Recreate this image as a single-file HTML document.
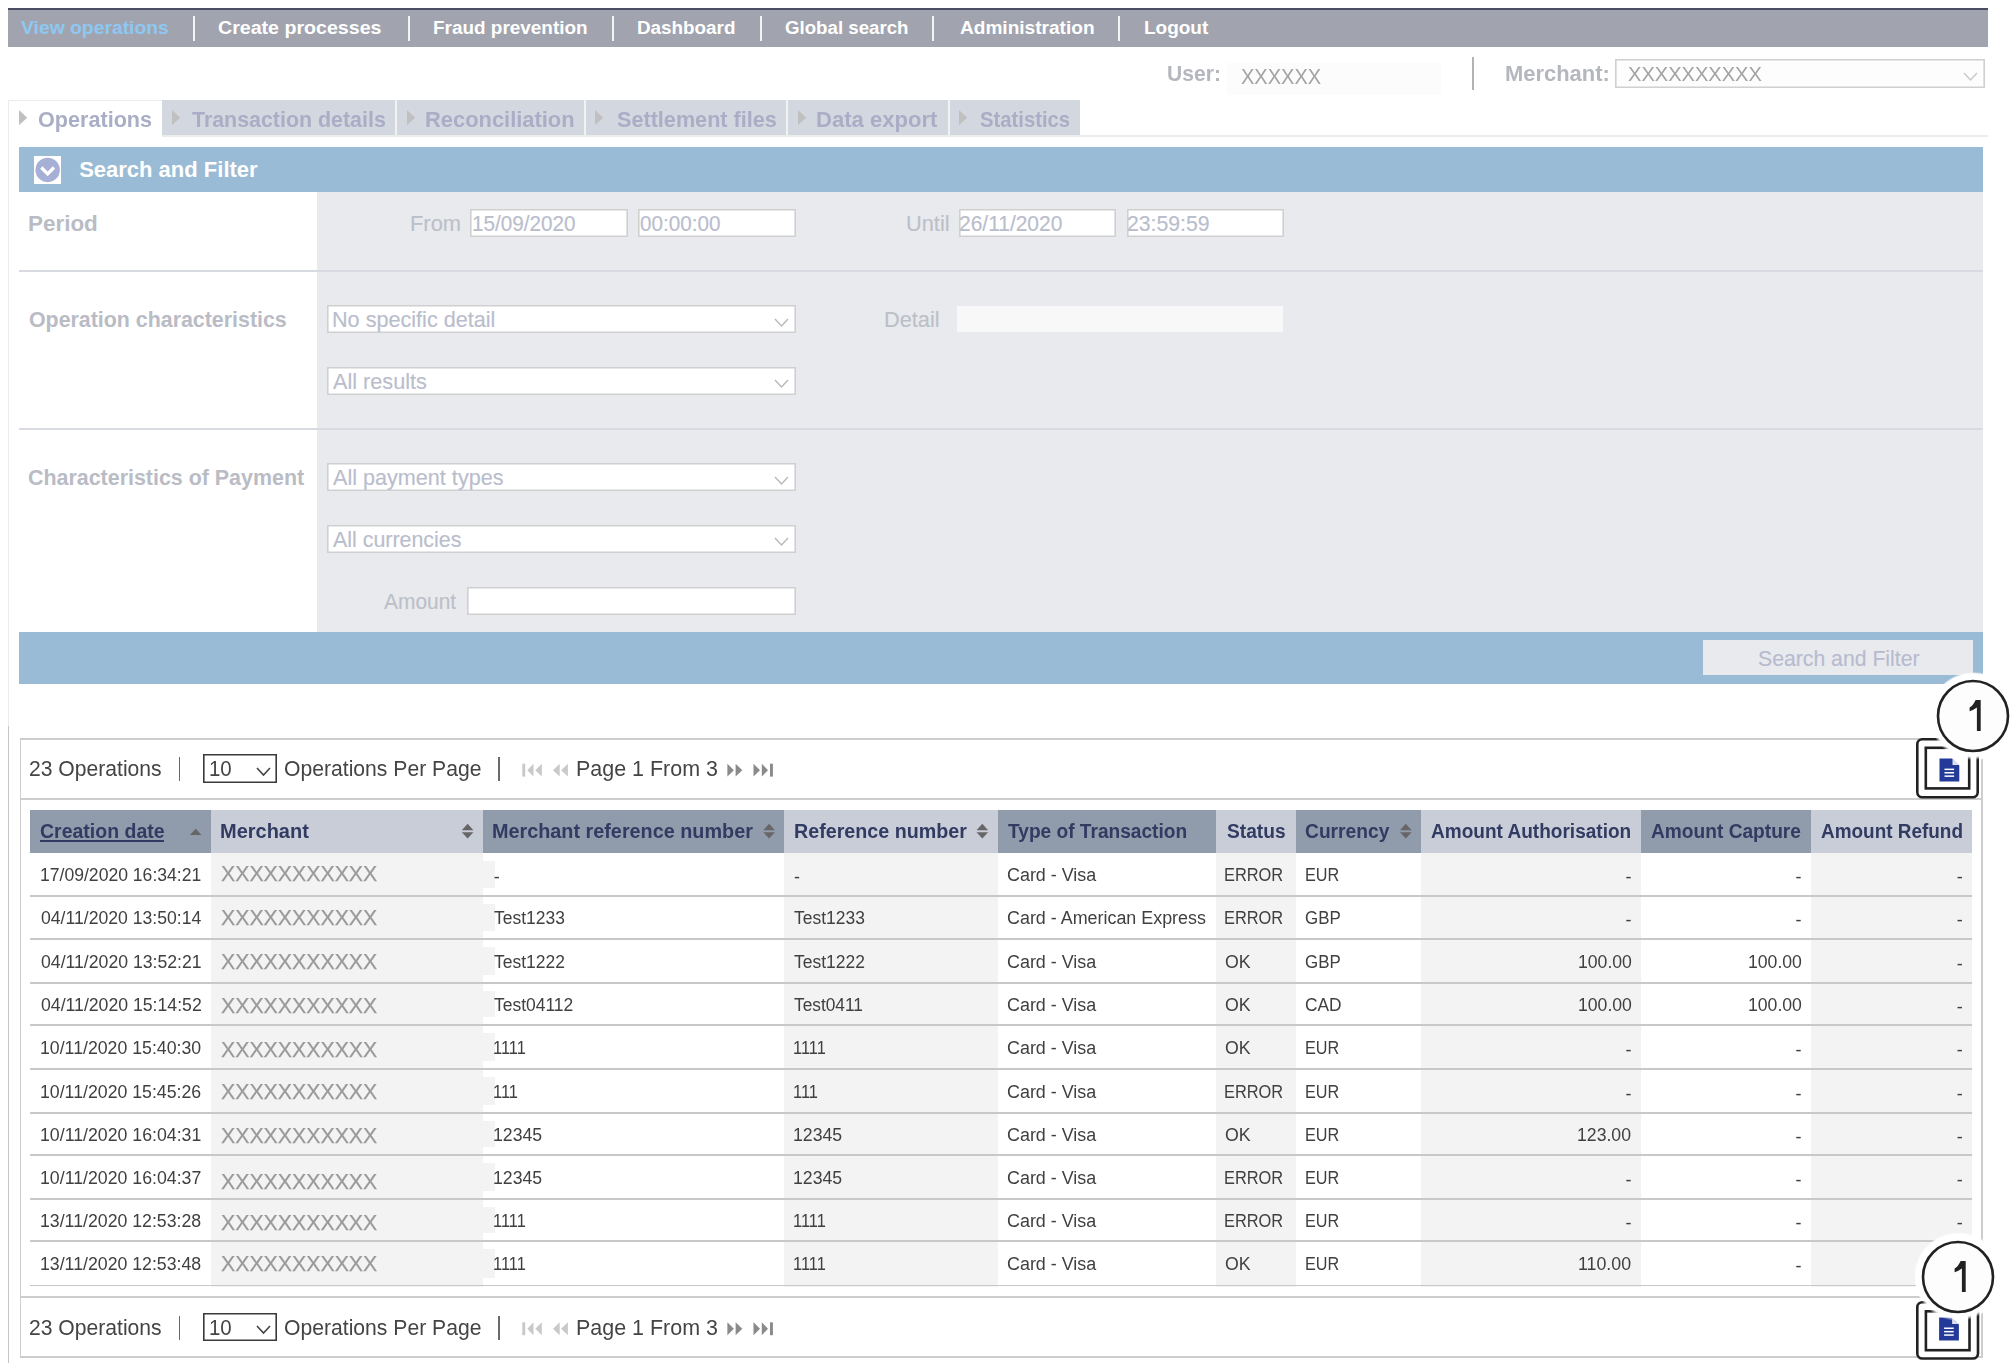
<!DOCTYPE html><html><head><meta charset="utf-8"><title>View operations</title><style>
html,body{margin:0;padding:0;}
body{width:2016px;height:1363px;position:relative;overflow:hidden;background:#fff;font-family:"Liberation Sans",sans-serif;}
.t{position:absolute;white-space:pre;}
.b{position:absolute;}
</style></head><body>
<div id="page" style="position:absolute;left:0;top:0;width:2016px;height:1363px;filter:blur(0.4px);">
<!-- top navigation -->
<div class="b" style="left:8px;top:8px;width:1980.00px;height:39.00px;background:#a1a4ae;"></div>
<div class="b" style="left:8px;top:8px;width:1980.00px;height:2.00px;background:#4b4d64;"></div>
<span class="t" style="left:20.65px;top:17.02px;font-size:19.2px;line-height:22.06px;color:#8ec8f2;font-weight:bold;transform:scaleX(1.0071);transform-origin:0 0;">View operations</span>
<span class="t" style="left:218.42px;top:17.02px;font-size:19.2px;line-height:22.06px;color:#fff;font-weight:bold;transform:scaleX(1.0218);transform-origin:0 0;">Create processes</span>
<span class="t" style="left:433.42px;top:17.02px;font-size:19.2px;line-height:22.06px;color:#fff;font-weight:bold;transform:scaleX(0.9866);transform-origin:0 0;">Fraud prevention</span>
<span class="t" style="left:636.73px;top:17.02px;font-size:19.2px;line-height:22.06px;color:#fff;font-weight:bold;transform:scaleX(0.9823);transform-origin:0 0;">Dashboard</span>
<span class="t" style="left:785.25px;top:17.02px;font-size:19.2px;line-height:22.06px;color:#fff;font-weight:bold;transform:scaleX(0.9733);transform-origin:0 0;">Global search</span>
<span class="t" style="left:959.82px;top:17.02px;font-size:19.2px;line-height:22.06px;color:#fff;font-weight:bold;transform:scaleX(0.9938);transform-origin:0 0;">Administration</span>
<span class="t" style="left:1143.92px;top:17.02px;font-size:19.2px;line-height:22.06px;color:#fff;font-weight:bold;transform:scaleX(0.9889);transform-origin:0 0;">Logout</span>
<div class="b" style="left:193px;top:16px;width:2.00px;height:25.00px;background:#f4f4f6;"></div>
<div class="b" style="left:408px;top:16px;width:2.00px;height:25.00px;background:#f4f4f6;"></div>
<div class="b" style="left:612px;top:16px;width:2.00px;height:25.00px;background:#f4f4f6;"></div>
<div class="b" style="left:760px;top:16px;width:2.00px;height:25.00px;background:#f4f4f6;"></div>
<div class="b" style="left:932px;top:16px;width:2.00px;height:25.00px;background:#f4f4f6;"></div>
<div class="b" style="left:1118px;top:16px;width:2.00px;height:25.00px;background:#f4f4f6;"></div>
<!-- user / merchant -->
<span class="t" style="left:1166.63px;top:61.04px;font-size:22px;line-height:25.28px;color:#b5b7bf;font-weight:bold;transform:scaleX(0.9583);transform-origin:0 0;">User:</span>
<div class="b" style="left:1227px;top:63px;width:214.00px;height:32.00px;background:#fcfcfc;"></div>
<span class="t" style="left:1240.85px;top:64.67px;font-size:21.2px;line-height:24.36px;color:#a3a3a3;transform:scaleX(0.9452);transform-origin:0 0;">XXXXXX</span>
<div class="b" style="left:1471.5px;top:57px;width:2.00px;height:33.00px;background:#b3b3b3;"></div>
<span class="t" style="left:1504.92px;top:61.04px;font-size:22px;line-height:25.28px;color:#b5b7bf;font-weight:bold;transform:scaleX(0.9967);transform-origin:0 0;">Merchant:</span>
<div class="b" style="left:1615px;top:59px;width:370.00px;height:29.00px;background:#fdfdfd;box-shadow:inset 0 0 0 1.6px #d0d0d0;"></div>
<span class="t" style="left:1628.45px;top:62.32px;font-size:20.5px;line-height:23.55px;color:#a3a3a3;transform:scaleX(0.9786);transform-origin:0 0;">XXXXXXXXXX</span>
<svg class="b" style="left:1961.5px;top:70.5px" width="17" height="11"><polyline points="2,2 8.5,9 15,2" fill="none" stroke="#c8c8c8" stroke-width="1.4"/></svg>
<!-- tabs -->
<div class="b" style="left:8px;top:100px;width:154.00px;height:36.00px;background:#fff;box-shadow:inset 1px 1px 0 #ececec;"></div>
<div class="b" style="left:162px;top:100px;width:918.00px;height:36.00px;background:#d3d7df;"></div>
<div class="b" style="left:395px;top:100px;width:2.00px;height:36.00px;background:#f2f2f2;"></div>
<div class="b" style="left:584px;top:100px;width:2.00px;height:36.00px;background:#f2f2f2;"></div>
<div class="b" style="left:786px;top:100px;width:2.00px;height:36.00px;background:#f2f2f2;"></div>
<div class="b" style="left:948px;top:100px;width:2.00px;height:36.00px;background:#f2f2f2;"></div>
<div class="b" style="left:162px;top:135px;width:1826.00px;height:2.00px;background:#ececec;"></div>
<span class="t" style="left:37.84px;top:106.54px;font-size:22px;line-height:25.28px;color:#a9aec6;font-weight:bold;transform:scaleX(0.9821);transform-origin:0 0;">Operations</span>
<svg class="b" style="left:18.9px;top:110.4px" width="9" height="16"><polygon points="0,0 8.2,7.65 0,15.3" fill="#c0c0c0"/></svg>
<span class="t" style="left:192.49px;top:106.54px;font-size:22px;line-height:25.28px;color:#a9aec6;font-weight:bold;transform:scaleX(0.9724);transform-origin:0 0;">Transaction details</span>
<svg class="b" style="left:171.9px;top:110.4px" width="9" height="16"><polygon points="0,0 8.2,7.65 0,15.3" fill="#c0c0c0"/></svg>
<span class="t" style="left:425.32px;top:106.54px;font-size:22px;line-height:25.28px;color:#a9aec6;font-weight:bold;transform:scaleX(0.9948);transform-origin:0 0;">Reconciliation</span>
<svg class="b" style="left:406.5px;top:110.4px" width="9" height="16"><polygon points="0,0 8.2,7.65 0,15.3" fill="#c0c0c0"/></svg>
<span class="t" style="left:617.05px;top:106.54px;font-size:22px;line-height:25.28px;color:#a9aec6;font-weight:bold;transform:scaleX(0.9830);transform-origin:0 0;">Settlement files</span>
<svg class="b" style="left:595.4px;top:110.4px" width="9" height="16"><polygon points="0,0 8.2,7.65 0,15.3" fill="#c0c0c0"/></svg>
<span class="t" style="left:816.41px;top:106.54px;font-size:22px;line-height:25.28px;color:#a9aec6;font-weight:bold;transform:scaleX(1.0030);transform-origin:0 0;">Data export</span>
<svg class="b" style="left:797.5px;top:110.4px" width="9" height="16"><polygon points="0,0 8.2,7.65 0,15.3" fill="#c0c0c0"/></svg>
<span class="t" style="left:979.99px;top:106.54px;font-size:22px;line-height:25.28px;color:#a9aec6;font-weight:bold;transform:scaleX(0.9205);transform-origin:0 0;">Statistics</span>
<svg class="b" style="left:958.7px;top:110.4px" width="9" height="16"><polygon points="0,0 8.2,7.65 0,15.3" fill="#c0c0c0"/></svg>
<div class="b" style="left:8px;top:136px;width:1.00px;height:590.00px;background:#ececec;"></div>
<div class="b" style="left:8px;top:726px;width:1.00px;height:637.00px;background:#c6c6c6;"></div>
<!-- search and filter -->
<div class="b" style="left:19px;top:147px;width:1964.00px;height:45.00px;background:#9abbd5;"></div>
<div class="b" style="left:33.8px;top:156px;width:27.40px;height:27.90px;background:#fff;"></div>
<svg class="b" style="left:33.8px;top:156px" width="28" height="28"><circle cx="13.65" cy="13.95" r="12.2" fill="#a6afd5"/><polyline points="7.3,11.5 13.65,17.9 20.0,11.5" fill="none" stroke="#fff" stroke-width="3.3"/></svg>
<span class="t" style="left:79.14px;top:157.04px;font-size:22px;line-height:25.28px;color:#fff;font-weight:bold;">Search and Filter</span>
<div class="b" style="left:19px;top:192px;width:298.00px;height:440.00px;background:#fff;"></div>
<div class="b" style="left:317px;top:192px;width:1666.00px;height:440.00px;background:#e9eaee;"></div>
<div class="b" style="left:19px;top:270.2px;width:1964.00px;height:1.60px;background:#d7dae1;"></div>
<div class="b" style="left:19px;top:428.2px;width:1964.00px;height:1.60px;background:#d7dae1;"></div>
<span class="t" style="left:27.89px;top:211.04px;font-size:22px;line-height:25.28px;color:#b9bcc5;font-weight:bold;transform:scaleX(1.0198);transform-origin:0 0;">Period</span>
<span class="t" style="left:28.85px;top:306.74px;font-size:22px;line-height:25.28px;color:#b9bcc5;font-weight:bold;transform:scaleX(0.9713);transform-origin:0 0;">Operation characteristics</span>
<span class="t" style="left:28.14px;top:464.94px;font-size:22px;line-height:25.28px;color:#b9bcc5;font-weight:bold;transform:scaleX(0.9733);transform-origin:0 0;">Characteristics of Payment</span>
<span class="t" style="left:410.10px;top:210.54px;font-size:22px;line-height:25.28px;color:#bcbfc8;transform:scaleX(0.9944);transform-origin:0 0;-webkit-text-stroke:0.15px #bcbfc8;">From</span>
<span class="t" style="left:905.51px;top:210.54px;font-size:22px;line-height:25.28px;color:#bcbfc8;transform:scaleX(0.9900);transform-origin:0 0;-webkit-text-stroke:0.15px #bcbfc8;">Until</span>
<div class="b" style="left:470px;top:208.8px;width:158.00px;height:28.40px;background:#fff;box-shadow:inset 0 0 0 1.6px #d0d0d0;"></div>
<span class="t" style="left:472.20px;top:210.94px;font-size:22px;line-height:25.28px;color:#b9bdcc;transform:scaleX(0.9402);transform-origin:0 0;-webkit-text-stroke:0.15px #b9bdcc;">15/09/2020</span>
<div class="b" style="left:638px;top:208.8px;width:158.00px;height:28.40px;background:#fff;box-shadow:inset 0 0 0 1.6px #d0d0d0;"></div>
<span class="t" style="left:639.87px;top:210.94px;font-size:22px;line-height:25.28px;color:#b9bdcc;transform:scaleX(0.9413);transform-origin:0 0;-webkit-text-stroke:0.15px #b9bdcc;">00:00:00</span>
<div class="b" style="left:959px;top:208.8px;width:157.00px;height:28.40px;background:#fff;box-shadow:inset 0 0 0 1.6px #d0d0d0;"></div>
<span class="t" style="left:959.35px;top:210.94px;font-size:22px;line-height:25.28px;color:#b9bdcc;transform:scaleX(0.9527);transform-origin:0 0;-webkit-text-stroke:0.15px #b9bdcc;">26/11/2020</span>
<div class="b" style="left:1127px;top:208.8px;width:157.00px;height:28.40px;background:#fff;box-shadow:inset 0 0 0 1.6px #d0d0d0;"></div>
<span class="t" style="left:1127.14px;top:210.94px;font-size:22px;line-height:25.28px;color:#b9bdcc;transform:scaleX(0.9647);transform-origin:0 0;-webkit-text-stroke:0.15px #b9bdcc;">23:59:59</span>
<div class="b" style="left:327px;top:305px;width:469.00px;height:28.20px;background:#fff;box-shadow:inset 0 0 0 1.6px #d0d0d0;"></div>
<span class="t" style="left:331.52px;top:306.84px;font-size:22px;line-height:25.28px;color:#b9bdcc;transform:scaleX(0.9827);transform-origin:0 0;-webkit-text-stroke:0.15px #b9bdcc;">No specific detail</span>
<svg class="b" style="left:772.5px;top:316.6px" width="17" height="11"><polyline points="2,2 8.5,9 15,2" fill="none" stroke="#b8b8b8" stroke-width="1.4"/></svg>
<div class="b" style="left:327px;top:366.8px;width:469.00px;height:28.20px;background:#fff;box-shadow:inset 0 0 0 1.6px #d0d0d0;"></div>
<span class="t" style="left:333.25px;top:368.64px;font-size:22px;line-height:25.28px;color:#b9bdcc;transform:scaleX(0.9837);transform-origin:0 0;-webkit-text-stroke:0.15px #b9bdcc;">All results</span>
<svg class="b" style="left:772.5px;top:378.4px" width="17" height="11"><polyline points="2,2 8.5,9 15,2" fill="none" stroke="#b8b8b8" stroke-width="1.4"/></svg>
<div class="b" style="left:327px;top:463px;width:469.00px;height:28.30px;background:#fff;box-shadow:inset 0 0 0 1.6px #d0d0d0;"></div>
<span class="t" style="left:333.25px;top:464.89px;font-size:22px;line-height:25.28px;color:#b9bdcc;transform:scaleX(0.9820);transform-origin:0 0;-webkit-text-stroke:0.15px #b9bdcc;">All payment types</span>
<svg class="b" style="left:772.5px;top:474.65px" width="17" height="11"><polyline points="2,2 8.5,9 15,2" fill="none" stroke="#b8b8b8" stroke-width="1.4"/></svg>
<div class="b" style="left:327px;top:524.8px;width:469.00px;height:28.20px;background:#fff;box-shadow:inset 0 0 0 1.6px #d0d0d0;"></div>
<span class="t" style="left:333.25px;top:526.64px;font-size:22px;line-height:25.28px;color:#b9bdcc;transform:scaleX(0.9723);transform-origin:0 0;-webkit-text-stroke:0.15px #b9bdcc;">All currencies</span>
<svg class="b" style="left:772.5px;top:536.4px" width="17" height="11"><polyline points="2,2 8.5,9 15,2" fill="none" stroke="#b8b8b8" stroke-width="1.4"/></svg>
<span class="t" style="left:883.90px;top:307.04px;font-size:22px;line-height:25.28px;color:#bcbfc8;transform:scaleX(0.9893);transform-origin:0 0;-webkit-text-stroke:0.15px #bcbfc8;">Detail</span>
<div class="b" style="left:957px;top:306px;width:326.00px;height:26.00px;background:#f8f8f8;"></div>
<span class="t" style="left:383.95px;top:588.84px;font-size:22px;line-height:25.28px;color:#bcbfc8;transform:scaleX(0.9514);transform-origin:0 0;-webkit-text-stroke:0.15px #bcbfc8;">Amount</span>
<div class="b" style="left:467px;top:586.6px;width:329.00px;height:28.40px;background:#fff;box-shadow:inset 0 0 0 1.6px #d0d0d0;"></div>
<div class="b" style="left:19px;top:632px;width:1964.00px;height:52.00px;background:#9abbd5;"></div>
<div class="b" style="left:1703px;top:640px;width:270.00px;height:35.40px;background:#e9eaee;"></div>
<span class="t" style="left:1758.35px;top:645.64px;font-size:22px;line-height:25.28px;color:#b7bbcf;transform:scaleX(0.9644);transform-origin:0 0;-webkit-text-stroke:0.15px #b7bbcf;">Search and Filter</span>
<!-- results -->
<div class="b" style="left:19.5px;top:738px;width:1.50px;height:620.00px;background:#cdcdcd;"></div>
<div class="b" style="left:1981px;top:738px;width:1.50px;height:620.00px;background:#cdcdcd;"></div>
<div class="b" style="left:19.5px;top:738px;width:1963.00px;height:1.50px;background:#cdcdcd;"></div>
<div class="b" style="left:19.5px;top:798px;width:1963.00px;height:1.50px;background:#cdcdcd;"></div>
<span class="t" style="left:29.24px;top:756.28px;font-size:22.5px;line-height:25.85px;color:#444444;transform:scaleX(0.9387);transform-origin:0 0;">23 Operations</span>
<div class="b" style="left:178.5px;top:757px;width:1.70px;height:24.00px;background:#6a6a6a;"></div>
<div class="b" style="left:203.3px;top:754.2px;width:74.20px;height:28.60px;background:#fff;box-shadow:inset 0 0 0 1.6px #3a3a3a;"></div>
<span class="t" style="left:209.27px;top:756.28px;font-size:22.5px;line-height:25.85px;color:#444444;transform:scaleX(0.9089);transform-origin:0 0;">10</span>
<svg class="b" style="left:255.0px;top:765.5px" width="17" height="11"><polyline points="2,2 8.5,9 15,2" fill="none" stroke="#444" stroke-width="1.6"/></svg>
<span class="t" style="left:284.20px;top:756.28px;font-size:22.5px;line-height:25.85px;color:#444444;transform:scaleX(0.9396);transform-origin:0 0;">Operations Per Page</span>
<div class="b" style="left:497.9px;top:757px;width:1.70px;height:24.00px;background:#6a6a6a;"></div>
<svg class="b" style="left:0;top:0" width="800" height="800"><rect x="522.3" y="763.7" width="2.9" height="12.899999999999977" fill="#c9c9c9"/><polygon points="533.5,763.7 527.3,770.1500000000001 533.5,776.6" fill="#c9c9c9"/><polygon points="541.8,763.7 535.3,770.1500000000001 541.8,776.6" fill="#c9c9c9"/><polygon points="559.7,763.7 553,770.1500000000001 559.7,776.6" fill="#c9c9c9"/><polygon points="567.9,763.7 561.1,770.1500000000001 567.9,776.6" fill="#c9c9c9"/><polygon points="727.4,763.7 733.9,770.1500000000001 727.4,776.6" fill="#8a8a8a"/><polygon points="735.6,763.7 742.3,770.1500000000001 735.6,776.6" fill="#8a8a8a"/><polygon points="753.5,763.7 760,770.1500000000001 753.5,776.6" fill="#8a8a8a"/><polygon points="761.8,763.7 768,770.1500000000001 761.8,776.6" fill="#8a8a8a"/><rect x="770" y="763.7" width="2.9" height="12.899999999999977" fill="#8a8a8a"/></svg>
<span class="t" style="left:575.83px;top:756.08px;font-size:22.5px;line-height:25.85px;color:#444444;transform:scaleX(0.9536);transform-origin:0 0;">Page 1 From 3</span>
<div class="b" style="left:19.5px;top:1296.3px;width:1963.00px;height:1.50px;background:#cdcdcd;"></div>
<div class="b" style="left:19.5px;top:1356.3px;width:1963.00px;height:1.50px;background:#cdcdcd;"></div>
<span class="t" style="left:29.24px;top:1314.88px;font-size:22.5px;line-height:25.85px;color:#444444;transform:scaleX(0.9387);transform-origin:0 0;">23 Operations</span>
<div class="b" style="left:178.5px;top:1315.6px;width:1.70px;height:24.00px;background:#6a6a6a;"></div>
<div class="b" style="left:203.3px;top:1312.8000000000002px;width:74.20px;height:28.60px;background:#fff;box-shadow:inset 0 0 0 1.6px #3a3a3a;"></div>
<span class="t" style="left:209.27px;top:1314.88px;font-size:22.5px;line-height:25.85px;color:#444444;transform:scaleX(0.9089);transform-origin:0 0;">10</span>
<svg class="b" style="left:255.0px;top:1324.1px" width="17" height="11"><polyline points="2,2 8.5,9 15,2" fill="none" stroke="#444" stroke-width="1.6"/></svg>
<span class="t" style="left:284.20px;top:1314.88px;font-size:22.5px;line-height:25.85px;color:#444444;transform:scaleX(0.9396);transform-origin:0 0;">Operations Per Page</span>
<div class="b" style="left:497.9px;top:1315.6px;width:1.70px;height:24.00px;background:#6a6a6a;"></div>
<svg class="b" style="left:0;top:0" width="800" height="1358.6"><rect x="522.3" y="1322.3000000000002" width="2.9" height="12.899999999999864" fill="#c9c9c9"/><polygon points="533.5,1322.3000000000002 527.3,1328.75 533.5,1335.2" fill="#c9c9c9"/><polygon points="541.8,1322.3000000000002 535.3,1328.75 541.8,1335.2" fill="#c9c9c9"/><polygon points="559.7,1322.3000000000002 553,1328.75 559.7,1335.2" fill="#c9c9c9"/><polygon points="567.9,1322.3000000000002 561.1,1328.75 567.9,1335.2" fill="#c9c9c9"/><polygon points="727.4,1322.3000000000002 733.9,1328.75 727.4,1335.2" fill="#8a8a8a"/><polygon points="735.6,1322.3000000000002 742.3,1328.75 735.6,1335.2" fill="#8a8a8a"/><polygon points="753.5,1322.3000000000002 760,1328.75 753.5,1335.2" fill="#8a8a8a"/><polygon points="761.8,1322.3000000000002 768,1328.75 761.8,1335.2" fill="#8a8a8a"/><rect x="770" y="1322.3000000000002" width="2.9" height="12.899999999999864" fill="#8a8a8a"/></svg>
<span class="t" style="left:575.83px;top:1314.68px;font-size:22.5px;line-height:25.85px;color:#444444;transform:scaleX(0.9536);transform-origin:0 0;">Page 1 From 3</span>
<div class="b" style="left:30px;top:809.5px;width:181.00px;height:43.50px;background:#909bab;"></div>
<div class="b" style="left:30px;top:853px;width:181.00px;height:433.50px;background:#fff;"></div>
<div class="b" style="left:211px;top:809.5px;width:272.00px;height:43.50px;background:#c9cdd8;"></div>
<div class="b" style="left:211px;top:853px;width:272.00px;height:433.50px;background:#f3f3f3;"></div>
<div class="b" style="left:483px;top:809.5px;width:301.00px;height:43.50px;background:#909bab;"></div>
<div class="b" style="left:483px;top:853px;width:301.00px;height:433.50px;background:#fff;"></div>
<div class="b" style="left:784px;top:809.5px;width:214.00px;height:43.50px;background:#c9cdd8;"></div>
<div class="b" style="left:784px;top:853px;width:214.00px;height:433.50px;background:#f3f3f3;"></div>
<div class="b" style="left:998px;top:809.5px;width:218.00px;height:43.50px;background:#909bab;"></div>
<div class="b" style="left:998px;top:853px;width:218.00px;height:433.50px;background:#fff;"></div>
<div class="b" style="left:1216px;top:809.5px;width:80.00px;height:43.50px;background:#c9cdd8;"></div>
<div class="b" style="left:1216px;top:853px;width:80.00px;height:433.50px;background:#f3f3f3;"></div>
<div class="b" style="left:1296px;top:809.5px;width:125.00px;height:43.50px;background:#909bab;"></div>
<div class="b" style="left:1296px;top:853px;width:125.00px;height:433.50px;background:#fff;"></div>
<div class="b" style="left:1421px;top:809.5px;width:220.00px;height:43.50px;background:#c9cdd8;"></div>
<div class="b" style="left:1421px;top:853px;width:220.00px;height:433.50px;background:#f3f3f3;"></div>
<div class="b" style="left:1641px;top:809.5px;width:170.00px;height:43.50px;background:#909bab;"></div>
<div class="b" style="left:1641px;top:853px;width:170.00px;height:433.50px;background:#fff;"></div>
<div class="b" style="left:1811px;top:809.5px;width:160.50px;height:43.50px;background:#c9cdd8;"></div>
<div class="b" style="left:1811px;top:853px;width:160.50px;height:433.50px;background:#f3f3f3;"></div>
<span class="t" style="left:39.62px;top:820.10px;font-size:20.3px;line-height:23.32px;color:#323b62;font-weight:bold;transform:scaleX(0.9614);transform-origin:0 0;">Creation date</span>
<span class="t" style="left:220.15px;top:820.10px;font-size:20.3px;line-height:23.32px;color:#323b62;font-weight:bold;transform:scaleX(0.9852);transform-origin:0 0;">Merchant</span>
<span class="t" style="left:492.26px;top:820.10px;font-size:20.3px;line-height:23.32px;color:#323b62;font-weight:bold;transform:scaleX(0.9766);transform-origin:0 0;">Merchant reference number</span>
<span class="t" style="left:793.57px;top:820.10px;font-size:20.3px;line-height:23.32px;color:#323b62;font-weight:bold;transform:scaleX(0.9711);transform-origin:0 0;">Reference number</span>
<span class="t" style="left:1008.01px;top:820.10px;font-size:20.3px;line-height:23.32px;color:#323b62;font-weight:bold;transform:scaleX(0.9421);transform-origin:0 0;">Type of Transaction</span>
<span class="t" style="left:1227.32px;top:820.10px;font-size:20.3px;line-height:23.32px;color:#323b62;font-weight:bold;transform:scaleX(0.9456);transform-origin:0 0;">Status</span>
<span class="t" style="left:1305.33px;top:820.10px;font-size:20.3px;line-height:23.32px;color:#323b62;font-weight:bold;transform:scaleX(0.9478);transform-origin:0 0;">Currency</span>
<span class="t" style="left:1431.02px;top:820.10px;font-size:20.3px;line-height:23.32px;color:#323b62;font-weight:bold;transform:scaleX(0.9387);transform-origin:0 0;">Amount Authorisation</span>
<span class="t" style="left:1651.02px;top:820.10px;font-size:20.3px;line-height:23.32px;color:#323b62;font-weight:bold;transform:scaleX(0.9440);transform-origin:0 0;">Amount Capture</span>
<span class="t" style="left:1820.53px;top:820.10px;font-size:20.3px;line-height:23.32px;color:#323b62;font-weight:bold;transform:scaleX(0.9337);transform-origin:0 0;">Amount Refund</span>
<div class="b" style="left:40.4px;top:840.2px;width:123.30px;height:2.00px;background:#323b62;"></div>
<svg class="b" style="left:0;top:0" width="1500" height="860"><polygon points="189.9,835 195.7,828.7 201.5,835" fill="#666"/><polygon points="461.8,830.2 467.6,823.7 473.40000000000003,830.2" fill="#666"/><polygon points="461.8,832.2 467.6,838.6 473.40000000000003,832.2" fill="#666"/><polygon points="763.3,830.2 769.0999999999999,823.7 774.9,830.2" fill="#666"/><polygon points="763.3,832.2 769.0999999999999,838.6 774.9,832.2" fill="#666"/><polygon points="976.5,830.2 982.3,823.7 988.1,830.2" fill="#666"/><polygon points="976.5,832.2 982.3,838.6 988.1,832.2" fill="#666"/><polygon points="1400,830.2 1405.8,823.7 1411.6,830.2" fill="#666"/><polygon points="1400,832.2 1405.8,838.6 1411.6,832.2" fill="#666"/></svg>
<div class="b" style="left:483px;top:861px;width:12.00px;height:27.00px;background:#f3f3f3;"></div>
<span class="t" style="left:39.98px;top:865.22px;font-size:18px;line-height:20.68px;color:#404040;transform:scaleX(0.9764);transform-origin:0 0;">17/09/2020 16:34:21</span>
<span class="t" style="left:220.82px;top:861.80px;font-size:21.5px;line-height:24.70px;color:#999999;transform:scaleX(0.9905);transform-origin:0 0;-webkit-text-stroke:0.25px #999999;">XXXXXXXXXXX</span>
<span class="t" style="left:493.79px;top:867.02px;font-size:18px;line-height:20.68px;color:#404040;">-</span>
<span class="t" style="left:793.89px;top:867.02px;font-size:18px;line-height:20.68px;color:#404040;">-</span>
<span class="t" style="left:1007.30px;top:865.22px;font-size:18px;line-height:20.68px;color:#404040;transform:scaleX(0.9952);transform-origin:0 0;">Card - Visa</span>
<span class="t" style="left:1224.35px;top:865.22px;font-size:18px;line-height:20.68px;color:#404040;transform:scaleX(0.9109);transform-origin:0 0;">ERROR</span>
<span class="t" style="left:1304.76px;top:865.22px;font-size:18px;line-height:20.68px;color:#404040;transform:scaleX(0.8995);transform-origin:0 0;">EUR</span>
<span class="t" style="left:1625.58px;top:867.02px;font-size:18px;line-height:20.68px;color:#404040;">-</span>
<span class="t" style="left:1795.58px;top:867.02px;font-size:18px;line-height:20.68px;color:#404040;">-</span>
<span class="t" style="left:1956.78px;top:867.02px;font-size:18px;line-height:20.68px;color:#404040;">-</span>
<div class="b" style="left:483px;top:904px;width:12.00px;height:27.00px;background:#f3f3f3;"></div>
<span class="t" style="left:40.60px;top:908.22px;font-size:18px;line-height:20.68px;color:#404040;transform:scaleX(0.9786);transform-origin:0 0;">04/11/2020 13:50:14</span>
<span class="t" style="left:220.82px;top:905.70px;font-size:21.5px;line-height:24.70px;color:#999999;transform:scaleX(0.9905);transform-origin:0 0;-webkit-text-stroke:0.25px #999999;">XXXXXXXXXXX</span>
<span class="t" style="left:494.21px;top:908.22px;font-size:18px;line-height:20.68px;color:#404040;transform:scaleX(0.9699);transform-origin:0 0;">Test1233</span>
<span class="t" style="left:794.31px;top:908.22px;font-size:18px;line-height:20.68px;color:#404040;transform:scaleX(0.9699);transform-origin:0 0;">Test1233</span>
<span class="t" style="left:1007.31px;top:908.22px;font-size:18px;line-height:20.68px;color:#404040;transform:scaleX(0.9943);transform-origin:0 0;">Card - American Express</span>
<span class="t" style="left:1224.35px;top:908.22px;font-size:18px;line-height:20.68px;color:#404040;transform:scaleX(0.9109);transform-origin:0 0;">ERROR</span>
<span class="t" style="left:1305.25px;top:908.22px;font-size:18px;line-height:20.68px;color:#404040;transform:scaleX(0.9397);transform-origin:0 0;">GBP</span>
<span class="t" style="left:1625.58px;top:910.02px;font-size:18px;line-height:20.68px;color:#404040;">-</span>
<span class="t" style="left:1795.58px;top:910.02px;font-size:18px;line-height:20.68px;color:#404040;">-</span>
<span class="t" style="left:1956.78px;top:910.02px;font-size:18px;line-height:20.68px;color:#404040;">-</span>
<div class="b" style="left:483px;top:947px;width:12.00px;height:28.00px;background:#f3f3f3;"></div>
<span class="t" style="left:40.59px;top:951.72px;font-size:18px;line-height:20.68px;color:#404040;transform:scaleX(0.9807);transform-origin:0 0;">04/11/2020 13:52:21</span>
<span class="t" style="left:220.82px;top:949.90px;font-size:21.5px;line-height:24.70px;color:#999999;transform:scaleX(0.9905);transform-origin:0 0;-webkit-text-stroke:0.25px #999999;">XXXXXXXXXXX</span>
<span class="t" style="left:494.21px;top:951.72px;font-size:18px;line-height:20.68px;color:#404040;transform:scaleX(0.9717);transform-origin:0 0;">Test1222</span>
<span class="t" style="left:794.31px;top:951.72px;font-size:18px;line-height:20.68px;color:#404040;transform:scaleX(0.9717);transform-origin:0 0;">Test1222</span>
<span class="t" style="left:1007.30px;top:951.72px;font-size:18px;line-height:20.68px;color:#404040;transform:scaleX(0.9952);transform-origin:0 0;">Card - Visa</span>
<span class="t" style="left:1224.86px;top:951.72px;font-size:18px;line-height:20.68px;color:#404040;transform:scaleX(0.9868);transform-origin:0 0;">OK</span>
<span class="t" style="left:1305.25px;top:951.72px;font-size:18px;line-height:20.68px;color:#404040;transform:scaleX(0.9397);transform-origin:0 0;">GBP</span>
<span class="t" style="left:1577.58px;top:951.72px;font-size:18px;line-height:20.68px;color:#404040;transform:scaleX(0.9791);transform-origin:0 0;">100.00</span>
<span class="t" style="left:1747.58px;top:951.72px;font-size:18px;line-height:20.68px;color:#404040;transform:scaleX(0.9791);transform-origin:0 0;">100.00</span>
<span class="t" style="left:1956.78px;top:953.52px;font-size:18px;line-height:20.68px;color:#404040;">-</span>
<div class="b" style="left:483px;top:991px;width:12.00px;height:26.00px;background:#f3f3f3;"></div>
<span class="t" style="left:40.59px;top:994.72px;font-size:18px;line-height:20.68px;color:#404040;transform:scaleX(0.9810);transform-origin:0 0;">04/11/2020 15:14:52</span>
<span class="t" style="left:220.82px;top:994.00px;font-size:21.5px;line-height:24.70px;color:#999999;transform:scaleX(0.9905);transform-origin:0 0;-webkit-text-stroke:0.25px #999999;">XXXXXXXXXXX</span>
<span class="t" style="left:494.21px;top:994.72px;font-size:18px;line-height:20.68px;color:#404040;transform:scaleX(0.9700);transform-origin:0 0;">Test04112</span>
<span class="t" style="left:794.31px;top:994.72px;font-size:18px;line-height:20.68px;color:#404040;transform:scaleX(0.9613);transform-origin:0 0;">Test0411</span>
<span class="t" style="left:1007.30px;top:994.72px;font-size:18px;line-height:20.68px;color:#404040;transform:scaleX(0.9952);transform-origin:0 0;">Card - Visa</span>
<span class="t" style="left:1224.86px;top:994.72px;font-size:18px;line-height:20.68px;color:#404040;transform:scaleX(0.9868);transform-origin:0 0;">OK</span>
<span class="t" style="left:1305.23px;top:994.72px;font-size:18px;line-height:20.68px;color:#404040;transform:scaleX(0.9622);transform-origin:0 0;">CAD</span>
<span class="t" style="left:1577.58px;top:994.72px;font-size:18px;line-height:20.68px;color:#404040;transform:scaleX(0.9791);transform-origin:0 0;">100.00</span>
<span class="t" style="left:1747.58px;top:994.72px;font-size:18px;line-height:20.68px;color:#404040;transform:scaleX(0.9791);transform-origin:0 0;">100.00</span>
<span class="t" style="left:1956.78px;top:996.52px;font-size:18px;line-height:20.68px;color:#404040;">-</span>
<div class="b" style="left:483px;top:1033px;width:12.00px;height:28.00px;background:#f3f3f3;"></div>
<span class="t" style="left:39.97px;top:1037.72px;font-size:18px;line-height:20.68px;color:#404040;transform:scaleX(0.9835);transform-origin:0 0;">10/11/2020 15:40:30</span>
<span class="t" style="left:220.82px;top:1037.70px;font-size:21.5px;line-height:24.70px;color:#999999;transform:scaleX(0.9905);transform-origin:0 0;-webkit-text-stroke:0.25px #999999;">XXXXXXXXXXX</span>
<span class="t" style="left:493.37px;top:1037.72px;font-size:18px;line-height:20.68px;color:#404040;transform:scaleX(0.9114);transform-origin:0 0;">1111</span>
<span class="t" style="left:793.47px;top:1037.72px;font-size:18px;line-height:20.68px;color:#404040;transform:scaleX(0.9114);transform-origin:0 0;">1111</span>
<span class="t" style="left:1007.30px;top:1037.72px;font-size:18px;line-height:20.68px;color:#404040;transform:scaleX(0.9952);transform-origin:0 0;">Card - Visa</span>
<span class="t" style="left:1224.86px;top:1037.72px;font-size:18px;line-height:20.68px;color:#404040;transform:scaleX(0.9868);transform-origin:0 0;">OK</span>
<span class="t" style="left:1304.76px;top:1037.72px;font-size:18px;line-height:20.68px;color:#404040;transform:scaleX(0.8995);transform-origin:0 0;">EUR</span>
<span class="t" style="left:1625.58px;top:1039.52px;font-size:18px;line-height:20.68px;color:#404040;">-</span>
<span class="t" style="left:1795.58px;top:1039.52px;font-size:18px;line-height:20.68px;color:#404040;">-</span>
<span class="t" style="left:1956.78px;top:1039.52px;font-size:18px;line-height:20.68px;color:#404040;">-</span>
<div class="b" style="left:483px;top:1077px;width:12.00px;height:28.00px;background:#f3f3f3;"></div>
<span class="t" style="left:39.97px;top:1081.72px;font-size:18px;line-height:20.68px;color:#404040;transform:scaleX(0.9840);transform-origin:0 0;">10/11/2020 15:45:26</span>
<span class="t" style="left:220.82px;top:1080.00px;font-size:21.5px;line-height:24.70px;color:#999999;transform:scaleX(0.9905);transform-origin:0 0;-webkit-text-stroke:0.25px #999999;">XXXXXXXXXXX</span>
<span class="t" style="left:493.37px;top:1081.72px;font-size:18px;line-height:20.68px;color:#404040;transform:scaleX(0.9143);transform-origin:0 0;">111</span>
<span class="t" style="left:793.47px;top:1081.72px;font-size:18px;line-height:20.68px;color:#404040;transform:scaleX(0.9143);transform-origin:0 0;">111</span>
<span class="t" style="left:1007.30px;top:1081.72px;font-size:18px;line-height:20.68px;color:#404040;transform:scaleX(0.9952);transform-origin:0 0;">Card - Visa</span>
<span class="t" style="left:1224.35px;top:1081.72px;font-size:18px;line-height:20.68px;color:#404040;transform:scaleX(0.9109);transform-origin:0 0;">ERROR</span>
<span class="t" style="left:1304.76px;top:1081.72px;font-size:18px;line-height:20.68px;color:#404040;transform:scaleX(0.8995);transform-origin:0 0;">EUR</span>
<span class="t" style="left:1625.58px;top:1083.52px;font-size:18px;line-height:20.68px;color:#404040;">-</span>
<span class="t" style="left:1795.58px;top:1083.52px;font-size:18px;line-height:20.68px;color:#404040;">-</span>
<span class="t" style="left:1956.78px;top:1083.52px;font-size:18px;line-height:20.68px;color:#404040;">-</span>
<div class="b" style="left:483px;top:1121px;width:12.00px;height:26.00px;background:#f3f3f3;"></div>
<span class="t" style="left:39.97px;top:1124.72px;font-size:18px;line-height:20.68px;color:#404040;transform:scaleX(0.9846);transform-origin:0 0;">10/11/2020 16:04:31</span>
<span class="t" style="left:220.82px;top:1124.40px;font-size:21.5px;line-height:24.70px;color:#999999;transform:scaleX(0.9905);transform-origin:0 0;-webkit-text-stroke:0.25px #999999;">XXXXXXXXXXX</span>
<span class="t" style="left:493.27px;top:1124.72px;font-size:18px;line-height:20.68px;color:#404040;transform:scaleX(0.9819);transform-origin:0 0;">12345</span>
<span class="t" style="left:793.37px;top:1124.72px;font-size:18px;line-height:20.68px;color:#404040;transform:scaleX(0.9819);transform-origin:0 0;">12345</span>
<span class="t" style="left:1007.30px;top:1124.72px;font-size:18px;line-height:20.68px;color:#404040;transform:scaleX(0.9952);transform-origin:0 0;">Card - Visa</span>
<span class="t" style="left:1224.86px;top:1124.72px;font-size:18px;line-height:20.68px;color:#404040;transform:scaleX(0.9868);transform-origin:0 0;">OK</span>
<span class="t" style="left:1304.76px;top:1124.72px;font-size:18px;line-height:20.68px;color:#404040;transform:scaleX(0.8995);transform-origin:0 0;">EUR</span>
<span class="t" style="left:1577.48px;top:1124.72px;font-size:18px;line-height:20.68px;color:#404040;transform:scaleX(0.9809);transform-origin:0 0;">123.00</span>
<span class="t" style="left:1795.58px;top:1126.52px;font-size:18px;line-height:20.68px;color:#404040;">-</span>
<span class="t" style="left:1956.78px;top:1126.52px;font-size:18px;line-height:20.68px;color:#404040;">-</span>
<div class="b" style="left:483px;top:1163px;width:12.00px;height:28.00px;background:#f3f3f3;"></div>
<span class="t" style="left:39.97px;top:1167.72px;font-size:18px;line-height:20.68px;color:#404040;transform:scaleX(0.9848);transform-origin:0 0;">10/11/2020 16:04:37</span>
<span class="t" style="left:220.82px;top:1169.60px;font-size:21.5px;line-height:24.70px;color:#999999;transform:scaleX(0.9905);transform-origin:0 0;-webkit-text-stroke:0.25px #999999;">XXXXXXXXXXX</span>
<span class="t" style="left:493.27px;top:1167.72px;font-size:18px;line-height:20.68px;color:#404040;transform:scaleX(0.9819);transform-origin:0 0;">12345</span>
<span class="t" style="left:793.37px;top:1167.72px;font-size:18px;line-height:20.68px;color:#404040;transform:scaleX(0.9819);transform-origin:0 0;">12345</span>
<span class="t" style="left:1007.30px;top:1167.72px;font-size:18px;line-height:20.68px;color:#404040;transform:scaleX(0.9952);transform-origin:0 0;">Card - Visa</span>
<span class="t" style="left:1224.35px;top:1167.72px;font-size:18px;line-height:20.68px;color:#404040;transform:scaleX(0.9109);transform-origin:0 0;">ERROR</span>
<span class="t" style="left:1304.76px;top:1167.72px;font-size:18px;line-height:20.68px;color:#404040;transform:scaleX(0.8995);transform-origin:0 0;">EUR</span>
<span class="t" style="left:1625.58px;top:1169.52px;font-size:18px;line-height:20.68px;color:#404040;">-</span>
<span class="t" style="left:1795.58px;top:1169.52px;font-size:18px;line-height:20.68px;color:#404040;">-</span>
<span class="t" style="left:1956.78px;top:1169.52px;font-size:18px;line-height:20.68px;color:#404040;">-</span>
<div class="b" style="left:483px;top:1207px;width:12.00px;height:26.00px;background:#f3f3f3;"></div>
<span class="t" style="left:39.97px;top:1210.72px;font-size:18px;line-height:20.68px;color:#404040;transform:scaleX(0.9840);transform-origin:0 0;">13/11/2020 12:53:28</span>
<span class="t" style="left:220.82px;top:1210.70px;font-size:21.5px;line-height:24.70px;color:#999999;transform:scaleX(0.9905);transform-origin:0 0;-webkit-text-stroke:0.25px #999999;">XXXXXXXXXXX</span>
<span class="t" style="left:493.37px;top:1210.72px;font-size:18px;line-height:20.68px;color:#404040;transform:scaleX(0.9114);transform-origin:0 0;">1111</span>
<span class="t" style="left:793.47px;top:1210.72px;font-size:18px;line-height:20.68px;color:#404040;transform:scaleX(0.9114);transform-origin:0 0;">1111</span>
<span class="t" style="left:1007.30px;top:1210.72px;font-size:18px;line-height:20.68px;color:#404040;transform:scaleX(0.9952);transform-origin:0 0;">Card - Visa</span>
<span class="t" style="left:1224.35px;top:1210.72px;font-size:18px;line-height:20.68px;color:#404040;transform:scaleX(0.9109);transform-origin:0 0;">ERROR</span>
<span class="t" style="left:1304.76px;top:1210.72px;font-size:18px;line-height:20.68px;color:#404040;transform:scaleX(0.8995);transform-origin:0 0;">EUR</span>
<span class="t" style="left:1625.58px;top:1212.52px;font-size:18px;line-height:20.68px;color:#404040;">-</span>
<span class="t" style="left:1795.58px;top:1212.52px;font-size:18px;line-height:20.68px;color:#404040;">-</span>
<span class="t" style="left:1956.78px;top:1212.52px;font-size:18px;line-height:20.68px;color:#404040;">-</span>
<div class="b" style="left:483px;top:1249px;width:12.00px;height:28.50px;background:#f3f3f3;"></div>
<span class="t" style="left:39.97px;top:1253.97px;font-size:18px;line-height:20.68px;color:#404040;transform:scaleX(0.9840);transform-origin:0 0;">13/11/2020 12:53:48</span>
<span class="t" style="left:220.82px;top:1251.80px;font-size:21.5px;line-height:24.70px;color:#999999;transform:scaleX(0.9905);transform-origin:0 0;-webkit-text-stroke:0.25px #999999;">XXXXXXXXXXX</span>
<span class="t" style="left:493.37px;top:1253.97px;font-size:18px;line-height:20.68px;color:#404040;transform:scaleX(0.9114);transform-origin:0 0;">1111</span>
<span class="t" style="left:793.47px;top:1253.97px;font-size:18px;line-height:20.68px;color:#404040;transform:scaleX(0.9114);transform-origin:0 0;">1111</span>
<span class="t" style="left:1007.30px;top:1253.97px;font-size:18px;line-height:20.68px;color:#404040;transform:scaleX(0.9952);transform-origin:0 0;">Card - Visa</span>
<span class="t" style="left:1224.86px;top:1253.97px;font-size:18px;line-height:20.68px;color:#404040;transform:scaleX(0.9868);transform-origin:0 0;">OK</span>
<span class="t" style="left:1304.76px;top:1253.97px;font-size:18px;line-height:20.68px;color:#404040;transform:scaleX(0.8995);transform-origin:0 0;">EUR</span>
<span class="t" style="left:1578.47px;top:1253.97px;font-size:18px;line-height:20.68px;color:#404040;transform:scaleX(0.9872);transform-origin:0 0;">110.00</span>
<span class="t" style="left:1795.58px;top:1255.77px;font-size:18px;line-height:20.68px;color:#404040;">-</span>
<span class="t" style="left:1956.78px;top:1255.77px;font-size:18px;line-height:20.68px;color:#404040;">-</span>
<div class="b" style="left:30px;top:895.2px;width:1941.50px;height:1.60px;background:#c8c8c8;"></div>
<div class="b" style="left:30px;top:938.2px;width:1941.50px;height:1.60px;background:#c8c8c8;"></div>
<div class="b" style="left:30px;top:982.2px;width:1941.50px;height:1.60px;background:#c8c8c8;"></div>
<div class="b" style="left:30px;top:1024.2px;width:1941.50px;height:1.60px;background:#c8c8c8;"></div>
<div class="b" style="left:30px;top:1068.2px;width:1941.50px;height:1.60px;background:#c8c8c8;"></div>
<div class="b" style="left:30px;top:1112.2px;width:1941.50px;height:1.60px;background:#c8c8c8;"></div>
<div class="b" style="left:30px;top:1154.2px;width:1941.50px;height:1.60px;background:#c8c8c8;"></div>
<div class="b" style="left:30px;top:1198.2px;width:1941.50px;height:1.60px;background:#c8c8c8;"></div>
<div class="b" style="left:30px;top:1240.2px;width:1941.50px;height:1.60px;background:#c8c8c8;"></div>
<div class="b" style="left:30px;top:1284.7px;width:1941.50px;height:1.60px;background:#c8c8c8;"></div>
<!-- callouts -->
<div class="b" style="left:1930.5px;top:673.5px;width:85px;height:85px;border-radius:50%;background:#fff;box-shadow:0 0 1.5px 1px #fff;"></div>
<svg class="b" style="left:1913.5px;top:736px" width="67.0" height="64.5"><rect x="3.3" y="3.3" width="60.4" height="57.9" rx="5" fill="#fff" stroke="#222" stroke-width="2.6"/><rect x="11.8" y="11.8" width="43.4" height="40.6" fill="none" stroke="#222" stroke-width="2.6"/><g transform="translate(25.5,22.6)"><path d="M0,0 H12.5 L19.8,7 V23 H0 Z" fill="#233a98"/><path d="M13,0.5 V6.5 H19.3" fill="#fff" opacity="0.85"/><rect x="5" y="10" width="9.6" height="1.5" fill="#fff"/><rect x="5" y="13.4" width="9.6" height="1.5" fill="#fff"/><rect x="5" y="16.8" width="9.6" height="1.5" fill="#fff"/></g></svg>
<div class="b" style="left:1927px;top:670px;width:92px;height:92px;border-radius:50%;background:radial-gradient(circle, rgba(255,255,255,1) 37px, rgba(255,255,255,0.97) 40.5px, rgba(255,255,255,0) 44px);"></div>
<svg class="b" style="left:1933px;top:676px" width="80" height="80"><circle cx="40" cy="40" r="35" fill="#fdfdfd" stroke="#222" stroke-width="2.6"/><path d="M42.6,24.1 H47.7 V55.1 H43.9 V31.4 Q40.5,33.9 36.6,35.2 V31.5 Q40.4,29.4 42.6,24.1 Z" fill="#222"/></svg>
<div class="b" style="left:1915.8px;top:1234.2px;width:85px;height:85px;border-radius:50%;background:#fff;box-shadow:0 0 1.5px 1px #fff;"></div>
<svg class="b" style="left:1913.7px;top:1298.5px" width="67.3" height="62.8"><rect x="3.3" y="3.3" width="60.7" height="56.2" rx="5" fill="#fff" stroke="#222" stroke-width="2.6"/><rect x="11.9" y="12.3" width="43.6" height="38.9" fill="none" stroke="#222" stroke-width="2.6"/><g transform="translate(25.1,18.5)"><path d="M0,0 H12.5 L19.8,7 V23 H0 Z" fill="#233a98"/><path d="M13,0.5 V6.5 H19.3" fill="#fff" opacity="0.85"/><rect x="5" y="10" width="9.6" height="1.5" fill="#fff"/><rect x="5" y="13.4" width="9.6" height="1.5" fill="#fff"/><rect x="5" y="16.8" width="9.6" height="1.5" fill="#fff"/></g></svg>
<div class="b" style="left:1912.3px;top:1230.7px;width:92px;height:92px;border-radius:50%;background:radial-gradient(circle, rgba(255,255,255,1) 37px, rgba(255,255,255,0.97) 40.5px, rgba(255,255,255,0) 44px);"></div>
<svg class="b" style="left:1918.3px;top:1236.7px" width="80" height="80"><circle cx="40" cy="40" r="35" fill="#fdfdfd" stroke="#222" stroke-width="2.6"/><path d="M42.6,24.1 H47.7 V55.1 H43.9 V31.4 Q40.5,33.9 36.6,35.2 V31.5 Q40.4,29.4 42.6,24.1 Z" fill="#222"/></svg>
</div></body></html>
